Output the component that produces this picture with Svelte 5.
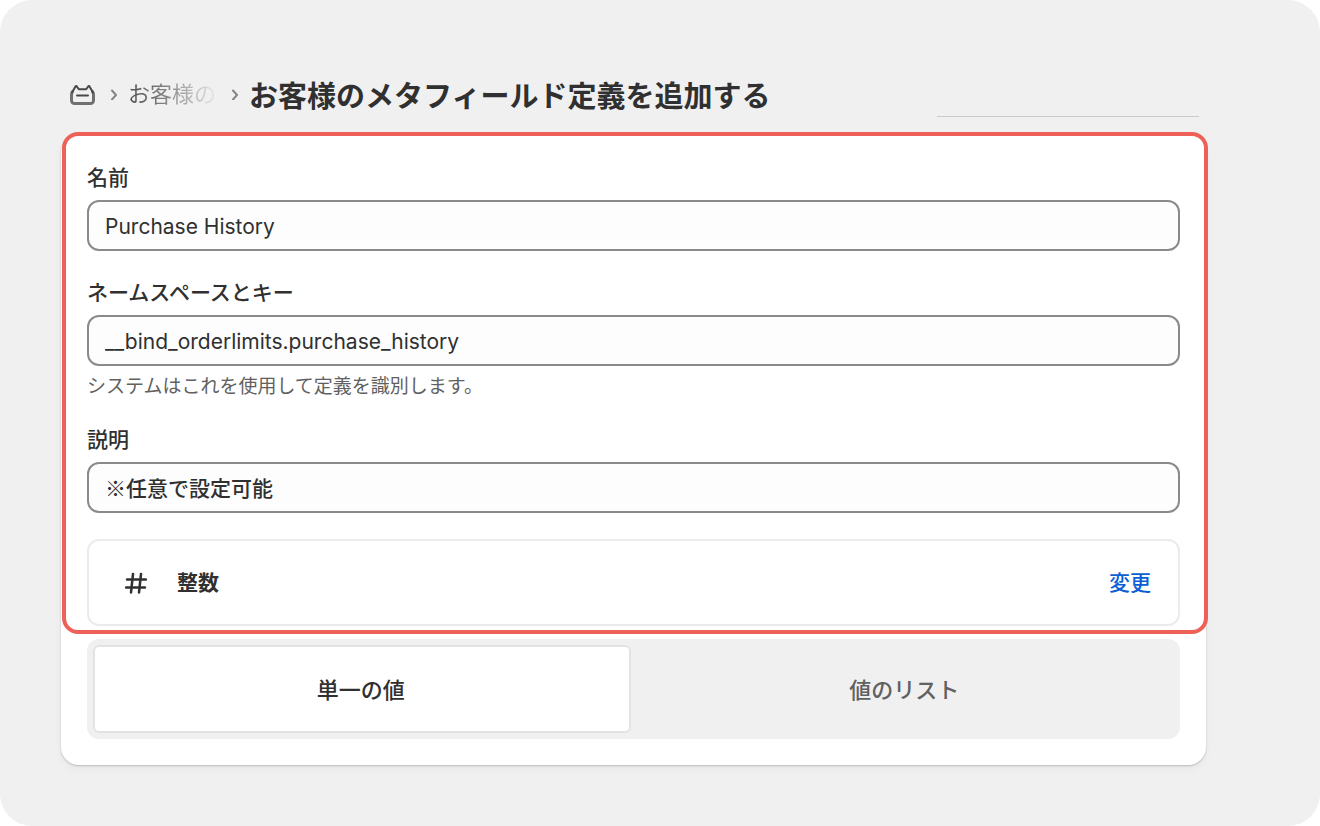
<script>
  let name = $state('Purchase History')
  let key = $state('__bind_orderlimits.purchase_history')
  let description = $state('※任意で設定可能')

  const modes = ['単一の値', '値のリスト']
  let mode = $state(modes[0])
</script>

{#snippet chevron()}
  <svg class="chevron" viewBox="0 0 8 12" aria-hidden="true">
    <path d="M2 2.500 6 7 2 11.500" />
  </svg>
{/snippet}

<main class="page">
  <header class="header">
    <nav class="crumbs">
      <a class="home" href="#top" aria-label="カスタムデータ">
        <svg viewBox="0 0 26 24" aria-hidden="true">
          <path class="side" d="M3.500 9.500Q2.500 11 2.500 13v5.500a3 3 0 0 0 3 3h16a3 3 0 0 0 3-3V13q0-2-1-3.500" />
          <path d="M3 10.500 6.200 5q.8-1.800 2 0l1.600 2.300h7.400L18.800 5q1.200-1.800 2 0L24 10.500M8 13.500h11" />
        </svg>
      </a>
      {@render chevron()}
      <a class="parent" href="#customers">お客様の</a>
      {@render chevron()}
    </nav>
    <h1>お客様のメタフィールド定義を追加する</h1>
    <div class="rule"></div>
  </header>

  <section class="card">
    <div class="fields">
      <div class="field">
        <label for="name">名前</label>
        <input id="name" type="text" bind:value={name}>
      </div>

      <div class="field">
        <label for="key">ネームスペースとキー</label>
        <input id="key" type="text" aria-describedby="key-help" bind:value={key}>
        <p id="key-help">システムはこれを使用して定義を識別します。</p>
      </div>

      <div class="field">
        <label for="description">説明</label>
        <input id="description" class="japanese" type="text" bind:value={description}>
      </div>

      <div class="type">
        <svg class="hash" viewBox="0 0 22 22" aria-hidden="true">
          <path d="M8 2 6 20.500M16 2l-2 18.500M2 7.500h19M1 15.500h19" />
        </svg>
        <strong>整数</strong>
        <button class="change" type="button">変更</button>
      </div>
    </div>

    <div class="modes">
      {#each modes as item}
        <button type="button" class:active={mode === item} aria-pressed={mode === item} onclick={() => mode = item}>{item}</button>
      {/each}
    </div>
  </section>
</main>

<style>
  :global(body) {
    margin: 0;
    background: #fff;
  }

  * {
    box-sizing: border-box;
  }

  .page {
    min-height: 100vh;
    padding: 60px 114px 60px 61px;
    border-radius: 32px;
    background: #f0f0f0;
    color: #303030;
    font-family: "Noto Sans CJK JP", sans-serif;
  }

  button, input {
    font-family: inherit;
    color: inherit;
  }

  .header {
    display: flex;
    align-items: center;
    height: 74px;
    padding: 0 7px 6px 8px;
  }

  .crumbs {
    display: flex;
    align-items: center;
  }

  .home {
    display: flex;
    color: #484848;
  }

  .home svg {
    width: 26px;
    height: 24px;
  }

  .home .side {
    stroke: #707070;
    stroke-width: 3;
  }

  svg {
    fill: none;
    stroke: currentColor;
    stroke-width: 2;
    stroke-linejoin: round;
    stroke-linecap: round;
  }

  .chevron {
    width: 8px;
    height: 12px;
    margin: 0 10px 0 15px;
    color: #858585;
  }

  .parent {
    padding-bottom: 4px;
    font-size: 22px;
    line-height: 32px;
    color: transparent;
    text-decoration: none;
    background: linear-gradient(90deg, #505050 0%, #808080 40%, #e8e8e8 100%);
    background-clip: text;
  }

  h1 {
    margin: 0;
    font-size: 29px;
    font-weight: 700;
    line-height: 40px;
    white-space: nowrap;
  }

  .rule {
    align-self: flex-end;
    width: 262px;
    margin: 0 0 11px auto;
    border-bottom: 1px solid #cacaca;
  }

  .card {
    padding: 30px 26px 26px;
    border-radius: 18px;
    background: #fff;
    box-shadow: 0 1px 2px #0003, 0 4px 8px #0000000a;
  }

  .fields {
    position: relative;
  }

  /* red frame drawn over the edges of the card */
  .fields::after {
    content: '';
    position: absolute;
    inset: -32px -28px -8px -25px;
    border: 4px solid #ee6158;
    border-radius: 16px;
    pointer-events: none;
  }

  .field + .field {
    margin-top: 28px;
  }

  label {
    display: block;
    margin-bottom: 12px;
    font-size: 21px;
    font-weight: 500;
    line-height: 24px;
  }

  input {
    display: block;
    width: 100%;
    height: 51px;
    padding: 2px 16px 0;
    border: 2px solid #8a8a8a;
    border-radius: 12px;
    background: #fdfdfd;
    font-family: Inter, "Noto Sans CJK JP", sans-serif;
    font-size: 21px;
  }

  .japanese {
    padding: 0 16px 2px;
    font-family: "Noto Sans CJK JP", sans-serif;
    font-weight: 500;
  }

  p {
    margin: 6px 0 0;
    font-size: 19px;
    line-height: 26px;
    color: #616161;
  }

  .type {
    display: flex;
    align-items: center;
    height: 87px;
    margin-top: 26px;
    padding: 0 27px 0 36px;
    border: 2px solid #ebebeb;
    border-radius: 12px;
  }

  .hash {
    width: 22px;
    height: 22px;
    margin-right: 30px;
    stroke-width: 2.500;
  }

  strong, .change {
    padding: 0 0 4px;
    font-size: 21px;
    line-height: 30px;
  }

  .change {
    margin-left: auto;
    border: none;
    background: none;
    color: #0a5fd6;
    font-weight: 500;
    cursor: pointer;
  }

  .modes {
    display: grid;
    grid-template-columns: 1fr 1fr;
    gap: 6px;
    margin-top: 13px;
    padding: 6px;
    border-radius: 12px;
    background: #f0f0f0;
  }

  .modes button {
    height: 88px;
    padding: 0 2px 2px 0;
    border: 2px solid transparent;
    border-radius: 6px;
    background: none;
    color: #616161;
    font-size: 22px;
    font-weight: 500;
    cursor: pointer;
  }

  .modes .active {
    border-color: #e3e3e3;
    background: #fff;
    color: #303030;
  }
</style>
